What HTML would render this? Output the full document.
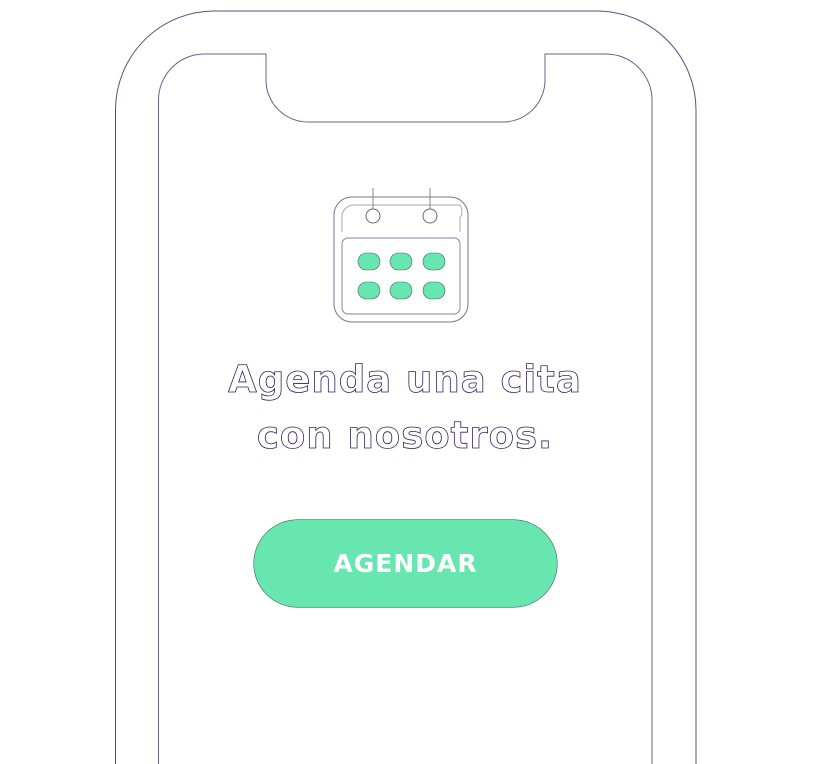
<!DOCTYPE html>
<html><head><style>
html,body{margin:0;width:835px;height:764px;background:#fff;overflow:hidden;position:relative}
.t{position:absolute;left:0;width:810px;text-align:center;font-family:"DejaVu Sans","Liberation Sans",sans-serif;font-weight:bold;font-size:37px;color:#fff;-webkit-text-stroke:0.8px #2d1f5e;letter-spacing:1px}
.btn{position:absolute;left:254px;top:520px;width:303px;height:87px;border-radius:44px;background:#68e6b0;box-shadow:0 0 0 0.6px #3a6a58;color:#fff;font-family:"DejaVu Sans","Liberation Sans",sans-serif;font-weight:bold;font-size:25px;letter-spacing:1px;text-align:center;line-height:87px}
</style></head><body>
<svg width="835" height="764" style="position:absolute;left:0;top:0" fill="none" stroke="#3b2f6e" stroke-width="1">
<path d="M115.5 764 V110 A99 99 0 0 1 214 11 H597 A99 99 0 0 1 696 110 V764" stroke="#5a4f85"/>
<path d="M158.5 764 V100 A46 46 0 0 1 204 54 H266 V80 A42 42 0 0 0 308 122 H503 A42 42 0 0 0 545 80 V54 H606 A46 46 0 0 1 652 100 V764" stroke="#6a608f"/>
<rect x="334" y="197" width="134" height="125" rx="18" stroke="#7a7199"/>
<rect x="342" y="238" width="118" height="76" rx="6" stroke="#8a82a8"/>
<path d="M342 232 V218 A12 12 0 0 1 354 205 H460 A12 12 0 0 1 460 218 V232" stroke="#aaa"/>
<circle cx="373" cy="216" r="7" stroke="#666"/><line x1="373" y1="188" x2="373" y2="209" stroke="#888"/>
<circle cx="430" cy="216" r="7" stroke="#666"/><line x1="430" y1="188" x2="430" y2="209" stroke="#888"/>
<g fill="#68e6b0" stroke="#3a6a58" stroke-width="0.6">
<rect x="358" y="253" width="22" height="17" rx="8.5"/><rect x="390" y="253" width="22" height="17" rx="8.5"/><rect x="423" y="253" width="22" height="17" rx="8.5"/>
<rect x="358" y="282" width="22" height="17" rx="8.5"/><rect x="390" y="282" width="22" height="17" rx="8.5"/><rect x="423" y="282" width="22" height="17" rx="8.5"/>
</g>
</svg>
<div class="t" style="top:358px">Agenda una cita</div>
<div class="t" style="top:414px">con nosotros.</div>
<div class="btn">AGENDAR</div>
</body></html>
